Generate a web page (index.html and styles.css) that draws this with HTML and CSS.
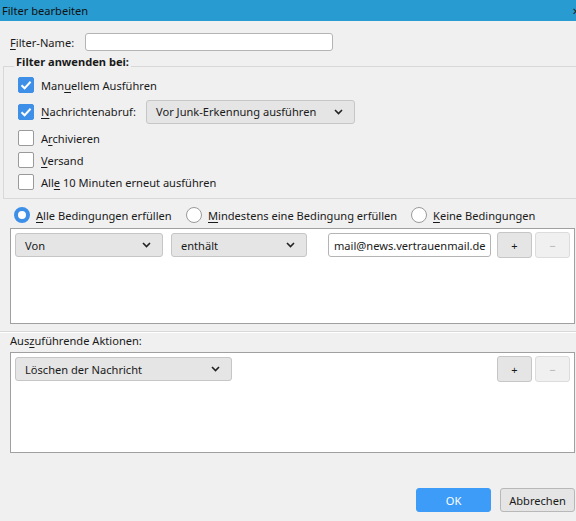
FILE: index.html
```html
<!DOCTYPE html>
<html lang="de">
<head>
<meta charset="utf-8">
<title>Filter bearbeiten</title>
<link rel="stylesheet" href="styles.css">
</head>
<body>
<div class="window">
  <div class="titlebar">
    <span class="title">Filter bearbeiten</span>
    <span class="close">✕</span>
  </div>

  <div class="name-row">
    <span class="label"><u>F</u>ilter-Name:</span>
    <div class="textbox name-input"></div>
  </div>

  <div class="group">
    <div class="legend">Filter anwenden bei:</div>
    <div class="cb-row">
      <span class="cb checked"><svg viewBox="0 0 16 16" width="16" height="16"><path d="M3.5 8.2 L6.6 11.2 L12.6 4.8" fill="none" stroke="#fff" stroke-width="2"/></svg></span>
      <span class="cb-label">Man<u>u</u>ellem Ausführen</span>
    </div>
    <div class="cb-row tall">
      <span class="cb checked"><svg viewBox="0 0 16 16" width="16" height="16"><path d="M3.5 8.2 L6.6 11.2 L12.6 4.8" fill="none" stroke="#fff" stroke-width="2"/></svg></span>
      <span class="cb-label junk-label"><u>N</u>achrichtenabruf:</span>
      <div class="select junk">
        <span>Vor Junk-Erkennung ausführen</span>
        <svg class="chev" viewBox="0 0 9 6" width="9" height="6"><path d="M1 1 L4.5 4.5 L8 1" fill="none" stroke="#222" stroke-width="1.6"/></svg>
      </div>
    </div>
    <div class="cb-row">
      <span class="cb"></span>
      <span class="cb-label">A<u>r</u>chivieren</span>
    </div>
    <div class="cb-row">
      <span class="cb"></span>
      <span class="cb-label"><u>V</u>ersand</span>
    </div>
    <div class="cb-row">
      <span class="cb"></span>
      <span class="cb-label">All<u>e</u> 10 Minuten erneut ausführen</span>
    </div>
  </div>

  <div class="radio-row">
    <span class="radio-opt opt1"><span class="radio on"></span><span><u>A</u>lle Bedingungen erfüllen</span></span>
    <span class="radio-opt opt2"><span class="radio"></span><span><u>M</u>indestens eine Bedingung erfüllen</span></span>
    <span class="radio-opt"><span class="radio"></span><span><u>K</u>eine Bedingungen</span></span>
  </div>

  <div class="listbox conditions">
    <div class="list-row">
      <div class="select von">
        <span>Von</span>
        <svg class="chev" viewBox="0 0 9 6" width="9" height="6"><path d="M1 1 L4.5 4.5 L8 1" fill="none" stroke="#222" stroke-width="1.6"/></svg>
      </div>
      <div class="select enthaelt">
        <span>enthält</span>
        <svg class="chev" viewBox="0 0 9 6" width="9" height="6"><path d="M1 1 L4.5 4.5 L8 1" fill="none" stroke="#222" stroke-width="1.6"/></svg>
      </div>
      <div class="textbox value">mail@news.vertrauenmail.de</div>
      <div class="btn small">+</div>
      <div class="btn small disabled">−</div>
    </div>
  </div>

  <div class="separator"></div>

  <div class="actions-label">Aus<u>z</u>uführende Aktionen:</div>

  <div class="listbox actions">
    <div class="list-row">
      <div class="select loeschen">
        <span>Löschen der Nachricht</span>
        <svg class="chev" viewBox="0 0 9 6" width="9" height="6"><path d="M1 1 L4.5 4.5 L8 1" fill="none" stroke="#222" stroke-width="1.6"/></svg>
      </div>
      <div class="spacer"></div>
      <div class="btn small">+</div>
      <div class="btn small disabled">−</div>
    </div>
  </div>

  <div class="footer">
    <div class="btn ok">OK</div>
    <div class="btn cancel">Abbrechen</div>
  </div>
</div>
</body>
</html>
```

FILE: styles.css
```css
* { box-sizing: border-box; }

html, body {
  margin: 0;
  padding: 0;
  width: 576px;
  height: 521px;
  overflow: hidden;
  background: #f0f0f0;
}

body {
  font-family: "Noto Sans", "Open Sans", sans-serif;
  font-size: 11.1px;
  color: #1a1a1a;
  white-space: nowrap;
}

u { text-decoration: underline; text-underline-offset: 2px; }

.window {
  display: flex;
  flex-direction: column;
  width: 576px;
  height: 521px;
}

.titlebar {
  height: 21px;
  background: #289bd0;
  display: flex;
  align-items: center;
  justify-content: space-between;
  padding-left: 2px;
  color: #111;
  flex: none;
}

.close {
  font-size: 10px;
  margin-right: -4px;
  color: #222;
}

.name-row {
  display: flex;
  align-items: center;
  margin-top: 12px;
  height: 18px;
  padding-left: 10px;
}

.name-row .label { width: 75px; }

.textbox {
  background: #fff;
  border: 1px solid #b4b4b4;
  border-radius: 3px;
}

.name-input {
  width: 248px;
  height: 18px;
}

.group {
  margin: 15px -10px 0 3px;
  border: 1px solid #d8d8d8;
  padding: 0 0 5px 0;
}

.legend {
  width: fit-content;
  margin: -13px 0 4px 10px;
  padding: 0 2px;
  line-height: 16px;
  background: #f0f0f0;
  font-weight: bold;
}

.cb-row {
  display: flex;
  align-items: center;
  height: 22px;
  padding-left: 14px;
}

.cb-row.tall { height: 31px; }

.cb {
  width: 16px;
  height: 16px;
  border: 1px solid #9a9a9a;
  border-radius: 2px;
  background: #fff;
  margin-right: 7px;
  flex: none;
  display: flex;
}

.cb.checked {
  background: #3d8fe8;
  border-color: #3d8fe8;
}

.cb.checked svg { margin: -1px; }

.junk-label { width: 105px; }

.select {
  display: flex;
  align-items: center;
  justify-content: space-between;
  height: 24px;
  background: #e5e5e5;
  border: 1px solid #c6c6c6;
  border-radius: 3px;
  padding: 0 11px 0 9px;
  flex: none;
}

.chev { flex: none; }

.junk {
  width: 209px;
}

.radio-row {
  display: flex;
  align-items: center;
  height: 20px;
  margin-top: 6px;
  padding-left: 14px;
}

.radio-opt {
  display: flex;
  align-items: center;
}

.opt1 { width: 172px; }
.opt2 { width: 225px; }

.radio {
  width: 16px;
  height: 16px;
  border-radius: 50%;
  border: 1px solid #9a9a9a;
  background: #fff;
  margin-right: 6px;
  flex: none;
}

.radio.on {
  border: 4.5px solid #3d8fe8;
}

.listbox {
  margin: 0 1px 0 10px;
  background: #fff;
  border: 1px solid #a0a0a0;
  padding: 3px 4px;
}

.conditions {
  margin-top: 3px;
  height: 96px;
}

.list-row {
  display: flex;
  align-items: center;
}

.von { width: 148px; }
.enthaelt { width: 136px; margin-left: 8px; }
.value {
  width: 163px;
  height: 24px;
  margin-left: 21px;
  display: flex;
  align-items: center;
  padding-left: 5px;
}

.btn {
  display: flex;
  align-items: center;
  justify-content: center;
  background: #e5e5e5;
  border: 1px solid #c6c6c6;
  border-radius: 3px;
}

.btn.small {
  width: 35px;
  height: 26px;
  margin-left: 4px;
}

.list-row .value + .btn { margin-left: 6px; }

.btn.disabled {
  background: #f0f0f0;
  border-color: #dcdcdc;
  color: #b0b0b0;
  margin-left: 3px;
}

.separator {
  margin-top: 7px;
  height: 2px;
  border-top: 1px solid #d8d8d8;
  border-bottom: 1px solid #fff;
}

.actions-label {
  padding-left: 10px;
  line-height: 16px;
}

.actions {
  margin-top: 3px;
  height: 101px;
}

.loeschen { width: 217px; }

.spacer { flex: 1; }

.footer {
  display: flex;
  justify-content: flex-end;
  margin-top: 35px;
  padding-right: 1px;
}

.btn.ok {
  width: 75px;
  height: 24px;
  background: #3c9cf7;
  border-color: #3c9cf7;
  color: #fff;
}

.btn.cancel {
  width: 75px;
  height: 24px;
  margin-left: 9px;
  border-color: #b8b8b8;
}
```
